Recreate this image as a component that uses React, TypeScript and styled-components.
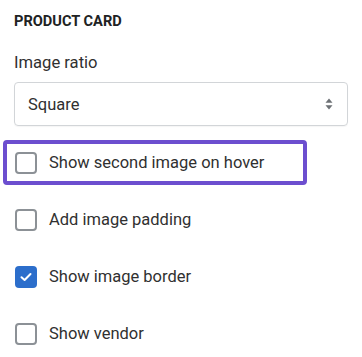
import React from 'react';
import styled, { createGlobalStyle } from 'styled-components';

const GlobalStyle = createGlobalStyle`
    html, body {
        margin: 0;
        padding: 0;
        background: #ffffff;
    }
    body {
        font-family: Roboto, "Liberation Sans", Arial, sans-serif;
        color: #303030;
        -webkit-font-smoothing: antialiased;
    }
`;

const Panel = styled.section`
    width: 362px;
    padding: 11px 14px 0 14px;
    box-sizing: border-box;
    display: flex;
    flex-direction: column;
`;

const Heading = styled.h3`
    margin: 0;
    font-size: 14.6px;
    line-height: 20px;
    font-weight: 700;
    text-transform: uppercase;
    color: #202223;
`;

const FieldLabel = styled.label`
    margin-top: 20px;
    font-size: 16.6px;
    line-height: 24px;
    color: #303030;
`;

const SelectBox = styled.div`
    margin-top: 7px;
    height: 44px;
    box-sizing: border-box;
    border: 1px solid #d2d5d8;
    border-radius: 4px;
    padding: 0 14px 0 13px;
    display: flex;
    align-items: center;
    justify-content: space-between;
    font-size: 16.5px;
    color: #303030;
    box-shadow: 0 1px 1px rgba(0, 0, 0, 0.04);
`;

const Options = styled.div`
    margin-top: 14px;
    display: flex;
    flex-direction: column;
    gap: 12px;
`;

const OptionRow = styled.label<{ $focused?: boolean }>`
    width: 304px;
    height: 45px;
    margin-left: -11px;
    box-sizing: border-box;
    padding-left: 8px;
    display: flex;
    align-items: center;
    gap: 12px;
    border: 4px solid ${(p) => (p.$focused ? '#6c4ecf' : 'transparent')};
    border-radius: 4px;
    font-size: 16.5px;
    color: #303030;
`;

const Box = styled.span<{ $checked?: boolean }>`
    width: 22px;
    height: 22px;
    box-sizing: border-box;
    border-radius: 4px;
    border: ${(p) => (p.$checked ? 'none' : '2px solid #8c9196')};
    background: ${(p) => (p.$checked ? '#2c6ecb' : '#ffffff')};
    display: flex;
    align-items: center;
    justify-content: center;
    flex-shrink: 0;
`;

const SortArrows = () => (
    <svg width="8" height="12" viewBox="0 0 8 12">
        <path d="M4 0.5 L7.5 4.8 H0.5 Z" fill="#6d7175" />
        <path d="M4 11.5 L7.5 7.2 H0.5 Z" fill="#6d7175" />
    </svg>
);

const Check = () => (
    <svg width="12" height="10" viewBox="0 0 12 10">
        <path d="M1.5 5.2 L4.6 8 L10.5 2" fill="none" stroke="#ffffff" strokeWidth="2" strokeLinecap="round" strokeLinejoin="round" />
    </svg>
);

type Option = { label: string; checked?: boolean; focused?: boolean };

const options: Option[] = [
    { label: 'Show second image on hover', focused: true },
    { label: 'Add image padding' },
    { label: 'Show image border', checked: true },
    { label: 'Show vendor' },
];

const App: React.FC = () => {
    return (
        <>
            <GlobalStyle />
            <Panel>
                <Heading>Product card</Heading>
                <FieldLabel>Image ratio</FieldLabel>
                <SelectBox>
                    <span>Square</span>
                    <SortArrows />
                </SelectBox>
                <Options>
                    {options.map((o) => (
                        <OptionRow key={o.label} $focused={o.focused}>
                            <Box $checked={o.checked}>{o.checked && <Check />}</Box>
                            {o.label}
                        </OptionRow>
                    ))}
                </Options>
            </Panel>
        </>
    );
};

export default App;
